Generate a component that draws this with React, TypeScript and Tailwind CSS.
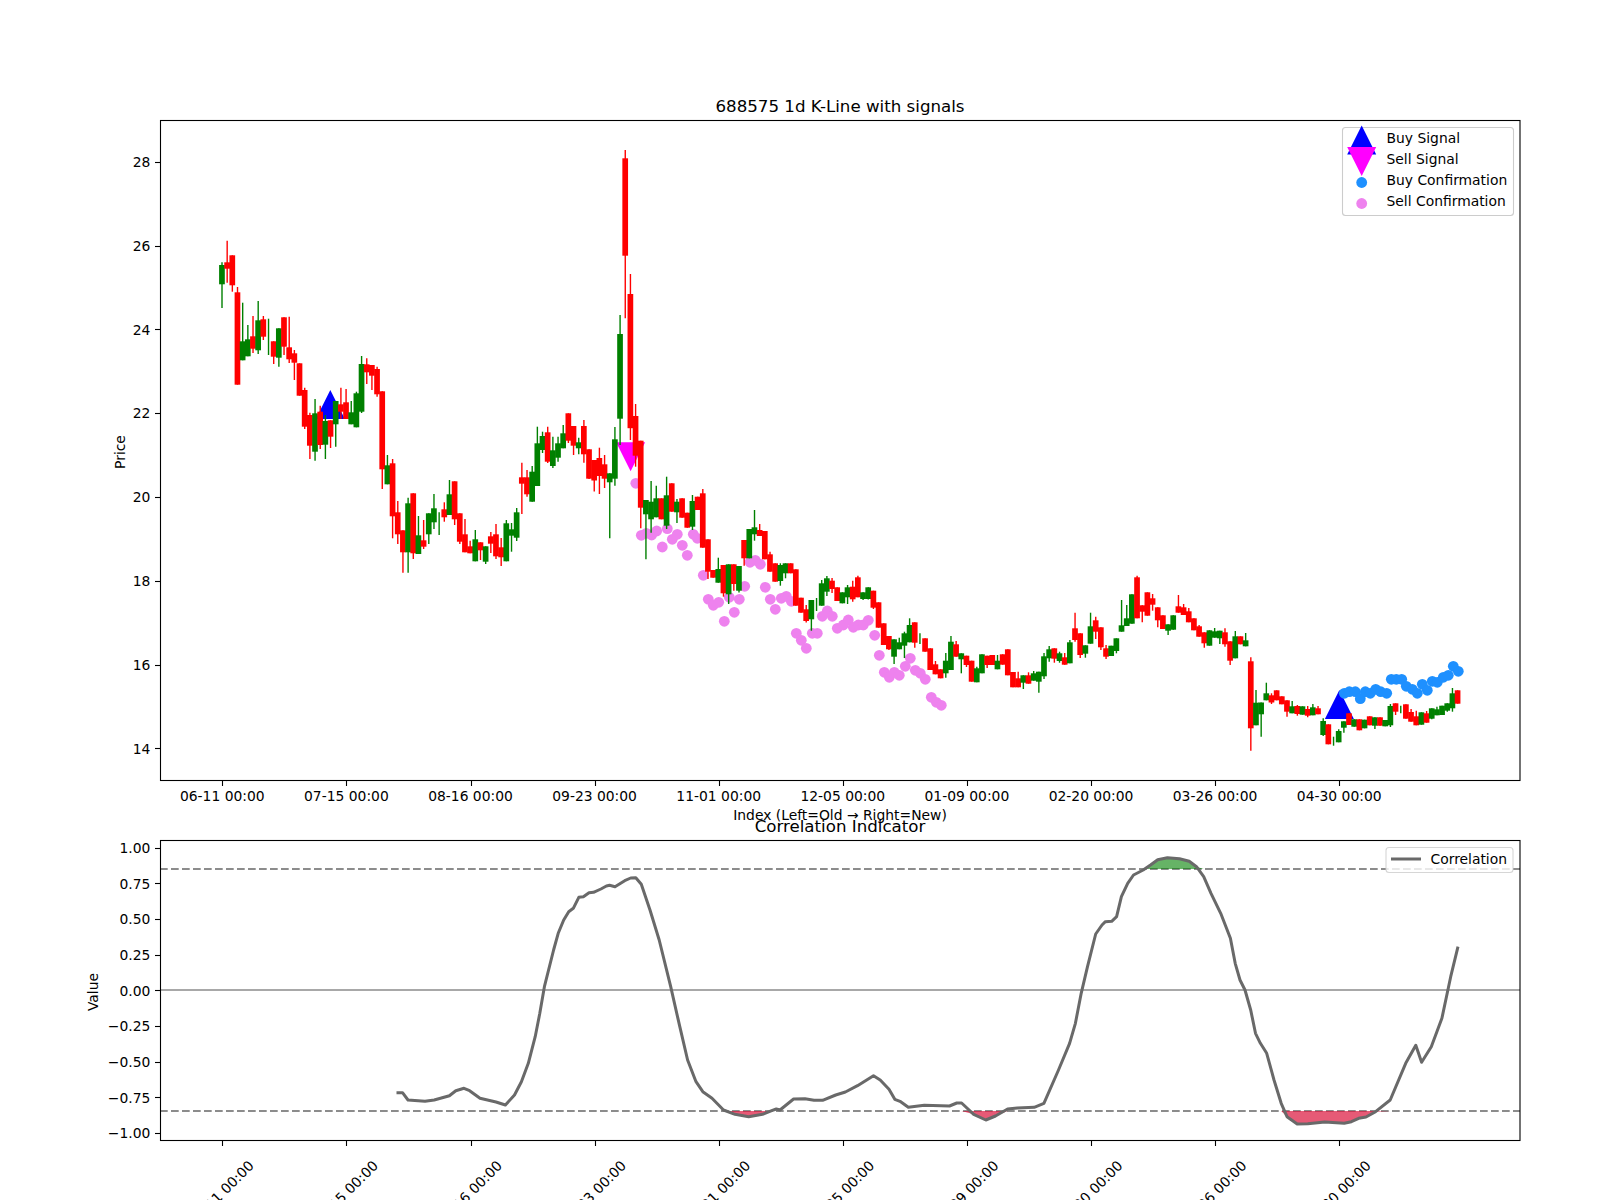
const C: number[][] = [
[1,265,284.3,262.3,308],[0,262.3,268.7,240.7,282.7],[0,255.3,285.3,255.3,291.7],[0,292.3,384.7,287,384.7],[1,341.3,360.3,302.7,360.3],
[1,339.3,356.3,325,356.3],[0,336.3,348.7,316,353],[1,320.3,350.3,301,354],[0,319.3,336.7,316,340],[1,0,0,318.7,355],
[0,341.3,356.7,341.3,364],[1,328.3,357.7,328.3,366.7],[0,317.3,346.7,317.3,355],[0,347.3,359.3,316.7,363],[0,353.3,362.7,350,380],
[0,363.3,395.7,363.3,395.7],[0,390,426.7,387.7,429],[0,415,445.7,412.7,459],[1,413.3,451.7,399,460.7],[0,411.7,445,405.7,449],
[1,421,444.7,415,459],[0,420.3,436.7,420.3,448],[1,401,424.3,401,446.7],[0,404.3,411.7,387.7,419],[0,402.3,419,389,419],
[1,412.3,424.3,401,424.3],[1,393.3,427.3,391.7,427.3],[1,364,411.7,356,413],[0,364.3,372.3,358.3,384],[0,365,375.7,365,390],
[0,369,394.3,366.7,396.7],[0,391.3,469.3,391.3,489],[1,465.3,484.3,455,484.3],[0,463.3,516.3,459,538.3],[0,512.3,534.3,501,544],
[0,530.3,552.3,530.3,572.7],[1,503.3,552.3,497.7,572.7],[0,493.3,553.3,493.3,559],[1,535.3,554,516,554],[0,540.3,546.7,520,549],
[1,513.3,534.3,513.3,544],[1,508.3,522.3,494,529],[1,0,0,512.3,535],[0,509.3,517.3,502.3,521.7],[1,494.3,515,480,515],
[0,481.3,519.3,481.3,525],[0,513.3,541.7,513.3,544],[0,534.3,552.3,519,552.3],[0,546.3,553.3,540.7,553.3],[1,539.3,561.3,530,561.3],
[0,542.3,550.3,542.3,560],[1,546.3,561.7,546.3,564],[0,536.3,543.7,532,553],[0,534.3,556.3,524,559],[0,547.3,557.3,538,566],
[1,523.3,561.3,520,561.3],[1,529.3,535.7,523,551.7],[1,512.3,537.7,508,541],[0,477.3,483.7,462.7,514],[0,477.3,494.3,470,496.7],
[1,471.7,501.7,466,501.7],[1,443.3,486,426.7,486],[1,436,450,431.7,453],[0,432.3,461.7,426.7,463],[1,450.3,466,436.7,468],
[1,443.3,457.7,436.7,461.7],[1,433.3,448.3,425,448.3],[0,413.3,440.7,413.3,443],[0,426,445.7,426,455],[1,442.3,448.3,437.7,454.3],
[0,426,454.3,420,462.7],[0,449.3,478.7,449.3,479],[0,460,480.5,460,491.5],[0,458,476,447.7,494],[0,464.3,478.7,455,488],
[1,473.3,482.3,473.3,538.3],[1,439.3,478.7,427,485.7],[1,334,418.7,315,445],[0,158.3,255.7,150,318.3],[0,294,428.2,274,440],
[0,416,455.7,404,466.7],[0,440.7,507.7,440.7,528.3],[1,500,514.3,500,559.3],[1,501.7,519.3,481,532.7],[1,498.3,517.3,485.7,517.3],
[0,498.3,519.3,498.3,519.3],[1,495.3,525.7,476.7,529],[0,483.3,511.7,483.3,511.7],[1,501.7,512.3,499,523],[0,498.3,517.7,498.3,517.7],
[0,512.7,527.7,512.7,527.7],[1,501,526.7,495,530],[0,496.7,510,496.7,510],[0,493.3,547.7,489,547.7],[0,539.3,571.7,539.3,579],
[0,570,577.7,570,577.7],[1,569,582.7,557.7,582.7],[0,565,593.3,565,596.7],[1,564.3,594.3,564.3,604],[0,564.3,584,564.3,590.7],
[1,566,590.7,566,592.5],[0,540,558.3,540,565.7],[1,529,558.3,529,558.3],[1,527.3,534.3,510,540.7],[0,530,536,524,536],
[0,531,559.3,531,559.3],[0,554.3,571.7,551.7,571.7],[0,563.3,581.7,563.3,581.7],[1,565,581,563.3,585.7],[1,563.3,573.3,563.3,578.3],
[0,563.3,573.3,563.3,573.3],[0,569.3,605.7,569.3,605.7],[0,597.7,612.7,597.7,612.7],[0,609.3,621,605,622.5],[1,600,619.3,600,630.7],
[1,0,0,598,611],[1,583.3,605.7,580,605.7],[1,578.3,591.7,576,596],[0,580.7,589,578,593],[0,587.3,601,587.3,601],
[1,592.3,603.3,592.3,603.3],[1,587.3,597.3,585,604],[0,586.7,599.3,580.7,601.7],[0,577.3,597.3,575.7,597.3],[1,592.3,599,592.3,600],
[1,587.3,599,587.3,599.5],[0,590.7,607.7,590.7,609],[0,602.3,627.7,602.3,627.7],[0,623.3,645,623.3,645],[0,636,649.3,636,650],
[1,639.3,656.7,639.3,664],[1,642.3,649.3,637.7,649.3],[1,633.3,645.7,631.7,658],[1,625,642.3,618.3,642.3],[0,622.3,642.7,622.3,647.7],
[1,0,0,633.3,644],[0,638.3,651.7,638.3,651.7],[0,648.3,670,648.3,670],[0,664.3,674.3,661,674.3],[0,669.3,678.3,669.3,678.3],
[1,660.7,673.3,653,677.7],[1,641.7,670,636,670],[0,644.3,656.7,641,656.7],[1,653.3,659.3,653.3,673.3],[0,655.7,665,655.7,667],
[0,660.7,681.7,660.7,681.7],[1,668.3,682.3,666.7,682.3],[1,654.3,673.3,654.3,673.3],[0,655.7,665,655.7,668],[0,655,665,655,665],
[1,660.7,669.3,655,669.3],[0,654.3,664.7,654.3,664.7],[0,649.3,675.3,649.3,675.3],[0,672,687.3,672,687.3],[0,678.3,687.3,671.7,687.3],
[1,675.3,682.7,675.3,689],[0,675.3,683.7,672.3,683.7],[1,673.3,680.7,671,680.7],[1,671.7,681.7,671.7,692.7],[1,656.3,676.3,653,679],
[1,649.3,658.3,646,661.7],[0,648.3,658.7,648.3,662.7],[1,653.3,661,651.7,662.7],[0,657.3,664.7,653,664.7],[1,642.3,663.3,640,663.3],
[0,628.3,640,612.7,641.7],[0,633.3,655,633.3,658],[1,645.3,653.7,645.3,657.7],[1,626.3,643.7,612.7,643.7],[0,620.3,631.7,616.7,639],
[0,627.3,647.3,627.3,650],[0,648.3,656.7,645,659],[1,645.7,656,645.7,656],[1,638.3,651,638.3,653.3],[1,625.3,631.7,600,631.7],
[1,618.3,626,605,626],[1,594.3,623.7,594.3,623.7],[0,577.3,618.3,575.7,618.3],[0,605.3,611.7,605.3,622.3],[0,592.3,615.7,592.3,615.7],
[0,598.3,604.7,594,610.7],[0,607.3,620.3,607.3,627.3],[0,615.3,629,615.3,629],[1,624.3,630.7,624.3,635],[1,615.3,629.7,615.3,629.7],
[0,606.3,612.7,595,612.7],[0,607.3,615,604,615],[0,611.3,622.3,608,622.3],[0,618.3,630.3,618.3,630.3],[0,626.3,636.7,625,636.7],
[0,632.3,643.3,632.3,647.7],[1,630.3,645.7,630.3,645.7],[1,631.3,637.7,628,637.7],[1,630.7,638.3,630.7,644],[0,632.3,644.3,628.3,646.7],
[0,641.3,660.7,641.3,665],[1,636.3,658.3,631,658.3],[0,636.3,644.3,636.3,644.3],[1,640.3,646.3,633,646.3],[0,661.3,728.3,657.3,750.7],
[1,702.7,725.3,690,725.3],[1,702.5,714.3,702.5,736.7],[1,693.3,700.3,682.7,700.3],[0,695.3,702.5,693.3,704],[0,690.3,700.3,690.3,700.3],
[0,696.3,704.3,696.3,704.3],[0,700.3,711.7,700.3,716.7],[1,706.3,713.3,701,713.3],[0,706,714,705,715.7],[1,706.3,714.7,706.3,714.7],
[0,709,715.7,706,717.3],[1,707.3,715.3,704,715.3],[0,708.3,714.3,706,714.3],[1,721,735,718.3,736],[0,724.3,744.3,724.3,744.3],
[1,0,0,736.7,745.7],[1,731,742.3,729.3,742.3],[1,721.3,727.7,721.3,732.7],[0,713.3,725,713.3,725],[1,719.3,726.7,719.3,726.7],
[0,719.3,730.3,719.3,730.3],[1,719.7,728.3,719.7,728.3],[0,716.3,725.3,716.3,725.3],[1,717.3,725.7,717.3,729],[0,717.3,725.7,717.3,725.7],
[1,720,726.3,720,726.3],[1,706,725.3,704,727],[0,703.3,711.7,703.3,715],[1,0,0,705.7,713.3],[0,704.3,718.7,704.3,718.7],
[0,712,721.7,709,721.7],[0,716.3,725.3,710.7,725.3],[1,712.3,724.7,712.3,724.7],[0,713.3,722.7,711,722.7],[1,708.3,718.7,708.3,719.3],
[1,709.3,715.3,706.7,715.3],[1,705.7,715,705.7,715],[1,703.3,710.7,703.3,711.7],[1,693.3,708.3,688,711.7],[0,690.3,703.7,690.3,703.7],
];

const SELL: number[][] = [[635.8,483.3],[641.3,535.3],[646.3,533.3],[651.7,535],[656.7,531],[662.3,547],[667.3,528.7],[672.3,539.3],[677.3,534.3],[682.3,545.3],[687.3,555.3],[693.3,534.3],[697.3,538.3],[703.3,575.3],[708.3,599.3],[713.3,605.3],[718.7,602.3],[724.3,621.3],[729.3,597.3],[734.3,612.3],[739.3,599.3],[744.7,586.3],[750,562.3],[755.3,560.3],[760.3,564.3],[765.3,587.3],[770.3,599.3],[775.3,609.3],[781.3,598.3],[786.3,596.3],[791.3,601.3],[796.3,633.3],[801.3,640.3],[806.3,648.3],[812.3,633.3],[817.3,633.3],[822.3,616.3],[827.3,611],[832.3,616.3],[837.3,628.3],[843.3,625],[848.3,620],[853.3,627.3],[858.3,625],[863.3,625],[868.3,620.3],[874.7,635.3],[879.3,655.3],[884.3,672.3],[889.3,677.3],[894.3,672.3],[899.3,675.3],[905.3,666.3],[910.3,658.3],[915.3,670.3],[920.3,673.3],[925.3,679.3],[931.3,697.3],[936.3,702.3],[941.3,705.3]];

const BUY: number[][] = [[1344.3,693.3],[1349.3,691.7],[1355.3,691.7],[1360.3,698.7],[1365.3,691.7],[1370.3,693.3],[1375.7,689.3],[1380.7,691.7],[1386.7,693.3],[1391.3,679.3],[1396.3,679.3],[1401.7,679.3],[1406.3,686.3],[1412.3,689.3],[1417.3,693.3],[1422.3,684.3],[1427.3,690.3],[1432.3,681.3],[1437.3,682.3],[1443.3,677.3],[1448.3,675.3],[1453.3,666.3],[1458.3,671.3]];

const LINE: number[][] = [[396.5,1092.7],[402.5,1092.7],[408,1100],[425,1101.3],[434.2,1100],[449.4,1095.7],[455.8,1090.7],[464,1088.3],[469.6,1090.7],[480,1098.3],[496,1102],[505.4,1105],[514.5,1095],[521.4,1081.7],[528.3,1063.3],[535.2,1036.7],[539.8,1013.3],[544.4,986.7],[553.6,950],[558.2,933.3],[563.7,920],[568.7,911.7],[573.3,908.3],[578.8,897.3],[583.4,896.7],[589,892.7],[593.5,892.3],[600.9,889],[606.4,886],[609.6,885.3],[615,886.7],[624.7,880.7],[630.7,878],[635.8,877.7],[641.3,884.3],[650,910],[659.2,940],[670.7,986.7],[679.8,1026.7],[687.6,1060],[696,1081.7],[702.8,1091.7],[712,1098.3],[723.5,1110],[735,1114.3],[748.7,1116.7],[762.5,1114.3],[771.7,1110.7],[776.3,1109],[780,1110],[793.6,1099],[805,1098.7],[814,1100.3],[822.6,1100.3],[835.7,1095],[845.4,1092],[857.5,1085.7],[873.5,1075.7],[880.2,1080],[889,1089.3],[894.8,1099.3],[900,1101.3],[908.3,1107.3],[924.3,1105.3],[949.5,1106],[956.8,1103],[961.6,1103],[973.7,1114.3],[985.8,1120],[995.5,1116],[1007.6,1109],[1017.3,1108],[1034.2,1107.3],[1043.9,1103.3],[1058.5,1070],[1069.6,1043.3],[1075.4,1023.3],[1081.2,993.3],[1087.5,966.7],[1095.7,934],[1102,925],[1105.4,921.7],[1111.7,921.3],[1116.6,916.7],[1121.4,896.7],[1127.7,883.3],[1133.5,875],[1143.2,870],[1150.5,865],[1157.7,859.7],[1167.4,857.7],[1179.5,858.7],[1189.2,861.3],[1196.5,866.7],[1203.7,876.7],[1211,893.3],[1220.7,913.3],[1230.4,938.3],[1235.2,963.3],[1240,980],[1245,990],[1250.7,1010],[1255.5,1033.3],[1260.4,1043.3],[1266.7,1053.3],[1274,1080],[1281.2,1103.3],[1287,1116.7],[1297.2,1124],[1307.8,1123.7],[1324.8,1122],[1344.2,1123.3],[1351.4,1121.7],[1358.7,1118.3],[1366,1117],[1375.6,1111.7],[1390.2,1100],[1405.7,1063.3],[1415.8,1045.3],[1421.6,1062.3],[1431.3,1046.7],[1441.9,1018.3],[1450.7,976.7],[1458,946.7]];

const DATES = ["06-11 00:00","07-15 00:00","08-16 00:00","09-23 00:00","11-01 00:00","12-05 00:00","01-09 00:00","02-20 00:00","03-26 00:00","04-30 00:00"];
const PRICES = [14,16,18,20,22,24,26,28];
const VALUES = [1,0.75,0.5,0.25,0,-0.25,-0.5,-0.75,-1];
const tickX = (i: number) => 222.3 + 124.1 * i;
const snap = (v: number) => Math.round(v) + 0.5;
const priceY = (p: number) => 161.8 + (28 - p) * 41.9;
const valueY = (v: number) => 990.4 - v * 142.6;
const fmt = (v: number) => (v < 0 ? "\u2212" : "") + Math.abs(v).toFixed(2);
const pts = (a: number[][]) => a.map((p) => p[0] + "," + p[1]).join(" ");
const UP = 869;
const LOW = 1111;
const upFill = pts(LINE.map((p) => [p[0], Math.min(p[1], UP)]));
const lowFill = pts(LINE.map((p) => [p[0], Math.max(p[1], LOW)]));
const tri = (x: number, y: number) => `${x},${y - 14.5} ${x - 14.5},${y + 14.5} ${x + 14.5},${y + 14.5}`;
const triDown = (x: number, y: number) => `${x},${y + 14.5} ${x - 14.5},${y - 14.5} ${x + 14.5},${y - 14.5}`;

function Candle({ c, i }: { c: number[]; i: number }) {
  const x = 222 + 5.17 * i;
  const col = c[0] ? "#008000" : "#ff0000";
  return (
    <g>
      <line x1={x} x2={x} y1={c[3]} y2={c[4]} stroke={col} strokeWidth={1.4} />
      {c[2] > c[1] && <rect x={x - 2.9} y={c[1]} width={5.7} height={c[2] - c[1]} fill={col} />}
    </g>
  );
}

export default function App() {
  return (
    <div className="w-[1600px] h-[1200px] bg-white overflow-hidden">
      <svg
        width={1600}
        height={1200}
        viewBox="0 0 1600 1200"
        className="block font-['DejaVu_Sans',sans-serif] text-[13.89px] fill-black"
      >
        <text x={840} y={112} textAnchor="middle" className="text-[16.67px]">688575 1d K-Line with signals</text>

        <polygon points={tri(330.3, 404.5)} fill="#0000ff" />
        <polygon points={tri(1339.4, 704.5)} fill="#0000ff" />
        <polygon points={triDown(630.6, 456.7)} fill="#ff00ff" />
        {SELL.map((p, i) => <circle key={i} cx={p[0]} cy={p[1]} r={5.4} fill="#ee82ee" />)}
        {BUY.map((p, i) => <circle key={i} cx={p[0]} cy={p[1]} r={5.4} fill="#1e90ff" />)}
        {C.map((c, i) => <Candle key={i} c={c} i={i} />)}

        <rect x={160.5} y={120.5} width={1359.5} height={660} fill="none" stroke="#000" strokeWidth={1.1} />
        {PRICES.map((p) => (
          <g key={p}>
            <line x1={155} x2={160} y1={snap(priceY(p))} y2={snap(priceY(p))} stroke="#000" strokeWidth={1.1} />
            <text x={150.3} y={priceY(p) + 5.2} textAnchor="end">{p}</text>
          </g>
        ))}
        {DATES.map((d, i) => (
          <g key={d}>
            <line x1={snap(tickX(i))} x2={snap(tickX(i))} y1={781} y2={786} stroke="#000" strokeWidth={1.1} />
            <text x={tickX(i)} y={801} textAnchor="middle">{d}</text>
          </g>
        ))}
        <text x={840} y={820} textAnchor="middle">Index (Left=Old → Right=New)</text>
        <text x={125} y={452} textAnchor="middle" transform="rotate(-90 125 452)">Price</text>

        <rect x={1342.5} y={127.5} width={171} height={88} rx={3} fill="#ffffff" fillOpacity={0.8} stroke="#cccccc" strokeWidth={1.1} />
        <polygon points={tri(1361.7, 140)} fill="#0000ff" />
        <polygon points={triDown(1361.7, 161.5)} fill="#ff00ff" />
        <circle cx={1361.7} cy={182.5} r={5.4} fill="#1e90ff" />
        <circle cx={1361.7} cy={203.5} r={5.4} fill="#ee82ee" />
        <text x={1386.5} y={143}>Buy Signal</text>
        <text x={1386.5} y={164}>Sell Signal</text>
        <text x={1386.5} y={185}>Buy Confirmation</text>
        <text x={1386.5} y={206}>Sell Confirmation</text>

        <text x={840} y={832} textAnchor="middle" className="text-[16.67px]">Correlation Indicator</text>
        <line x1={160} x2={1520} y1={UP} y2={UP} stroke="#808080" strokeOpacity={0.9} strokeWidth={2} strokeDasharray="7.7 3.3" />
        <line x1={160} x2={1520} y1={LOW} y2={LOW} stroke="#808080" strokeOpacity={0.9} strokeWidth={2} strokeDasharray="7.7 3.3" />
        <line x1={160} x2={1520} y1={990} y2={990} stroke="#a8a8a8" strokeWidth={2} />
        <polygon points={upFill} fill="#008000" fillOpacity={0.6} />
        <polygon points={lowFill} fill="#dc143c" fillOpacity={0.7} />
        <polyline points={pts(LINE)} fill="none" stroke="#696969" strokeWidth={3} strokeLinejoin="round" />

        <rect x={160.5} y={840.5} width={1359.5} height={300} fill="none" stroke="#000" strokeWidth={1.1} />
        {VALUES.map((v) => (
          <g key={v}>
            <line x1={155} x2={160} y1={snap(valueY(v))} y2={snap(valueY(v))} stroke="#000" strokeWidth={1.1} />
            <text x={150.3} y={valueY(v) + 5.2} textAnchor="end">{fmt(v)}</text>
          </g>
        ))}
        {DATES.map((d, i) => (
          <g key={d}>
            <line x1={snap(tickX(i))} x2={snap(tickX(i))} y1={1141} y2={1146} stroke="#000" strokeWidth={1.1} />
            <text
              x={tickX(i) - 1}
              y={1198}
              textAnchor="middle"
              transform={`rotate(-45 ${tickX(i) - 1} 1193)`}
            >
              {d}
            </text>
          </g>
        ))}
        <text x={98} y={992} textAnchor="middle" transform="rotate(-90 98 992)">Value</text>

        <rect x={1386} y={847.5} width={127} height={25} rx={3} fill="#ffffff" fillOpacity={0.8} stroke="#cccccc" strokeOpacity={0.8} strokeWidth={1.1} />
        <line x1={1391} x2={1421} y1={859} y2={859} stroke="#696969" strokeWidth={3} />
        <text x={1430.5} y={864}>Correlation</text>
      </svg>
    </div>
  );
}
